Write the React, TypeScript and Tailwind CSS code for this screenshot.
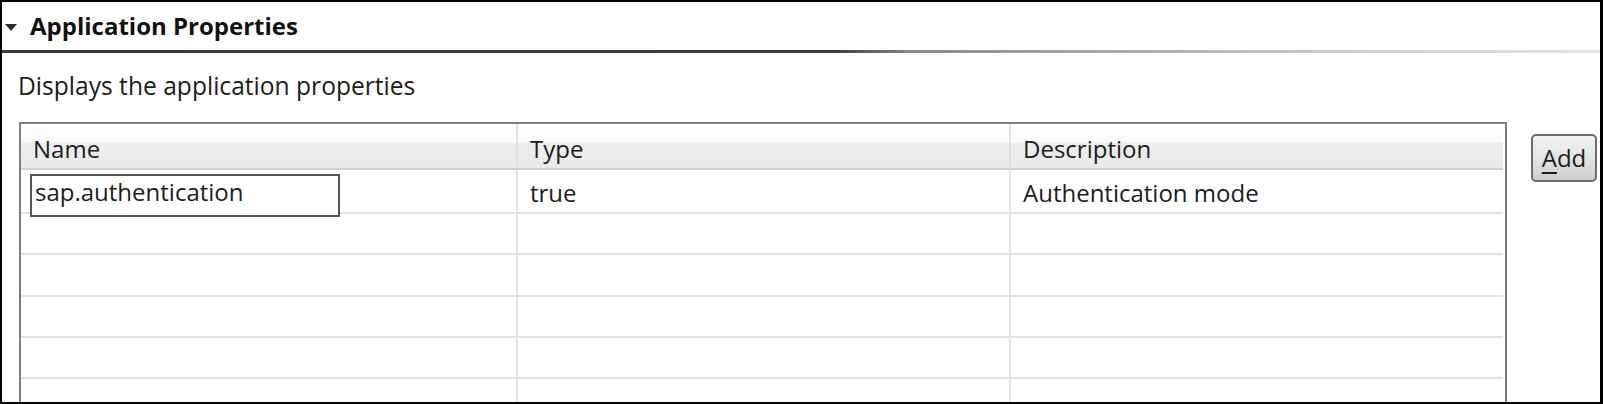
const columns = ["Name", "Type", "Description"];

const rows: { name: string; type: string; description: string }[] = [
  { name: "sap.authentication", type: "true", description: "Authentication mode" },
  { name: "", type: "", description: "" },
  { name: "", type: "", description: "" },
  { name: "", type: "", description: "" },
  { name: "", type: "", description: "" },
  { name: "", type: "", description: "" },
];

const rowHeights = ["h-[44px]", "h-[41px]", "h-[42px]", "h-[41px]", "h-[41px]", "h-[41px]"];

function HeaderCell({ label, className }: { label: string; className: string }) {
  return (
    <div className={`${className} h-full pl-3 pt-[9px] leading-[32px] text-[24px] text-[#1c1c1c]`}>
      {label}
    </div>
  );
}

export default function App() {
  return (
    <div className="w-[1603px] h-[404px] overflow-hidden bg-white border-t-2 border-l-2 border-r-[3px] border-b-2 border-black font-['Open_Sans',sans-serif] text-[#1c1c1c]">
      {/* section title */}
      <div className="h-[48px] flex items-start pt-[8px]">
        <svg className="ml-[3px] mt-[14px]" width="12" height="7" viewBox="0 0 12 7">
          <path d="M0 0 L12 0 L6 7 Z" fill="#2a2a2a" />
        </svg>
        <h2 className="ml-[13px] text-[24px] leading-[32px] font-bold text-[#111]">Application Properties</h2>
      </div>
      <div className="h-[3px] bg-[linear-gradient(to_right,#3a3a3a_0%,#3c3c3c_52%,#8a8a8a_57%,#cfcfcf_85%,#e2e2e2_100%)]" />

      <p className="mt-[17px] ml-[16px] text-[24.6px] leading-[32px]">Displays the application properties</p>

      <div className="flex items-start mt-[20px]">
        {/* properties table */}
        <div className="ml-[17px] w-[1488px] h-[320px] border-2 border-[#7e7e7e] pr-[2px]">
          <div className="flex h-[46px] border-b-2 border-[#cfcfcf] bg-[linear-gradient(to_bottom,#ffffff_0%,#fafafa_40%,#ededed_44%,#e9e9e9_100%)]">
            <HeaderCell label={columns[0]} className="w-[497px] border-r-2 border-[#e0e0e0]" />
            <HeaderCell label={columns[1]} className="w-[493px] border-r-2 border-[#e0e0e0]" />
            <HeaderCell label={columns[2]} className="flex-1" />
          </div>
          {rows.map((row, i) => (
            <div key={i} className={`flex ${rowHeights[i]} border-b-2 border-[#e3e3e3] text-[24px] leading-[32px]`}>
              <div className="relative w-[497px] border-r-2 border-[#e3e3e3]">
                {row.name && (
                  <div className="absolute left-[9px] top-[5px] w-[310px] h-[43px] border-2 border-[#555] bg-white pl-[3px] -mt-px">
                    {row.name}
                  </div>
                )}
              </div>
              <div className="w-[493px] border-r-2 border-[#e3e3e3] pl-3 pt-[7px]">{row.type}</div>
              <div className="flex-1 pl-3 pt-[7px]">{row.description}</div>
            </div>
          ))}
        </div>

        <button className="ml-[24px] mt-[12px] w-[66px] h-[48px] rounded-[5px] border-2 border-[#6e6e6e] bg-[linear-gradient(to_bottom,#f4f4f4_0%,#e4e4e4_50%,#cdcdcd_100%)] text-[24px] leading-[32px] text-[#1c1c1c] flex items-center justify-center">
          <span className="underline decoration-2 underline-offset-[5px]">A</span>dd
        </button>
      </div>
    </div>
  );
}
